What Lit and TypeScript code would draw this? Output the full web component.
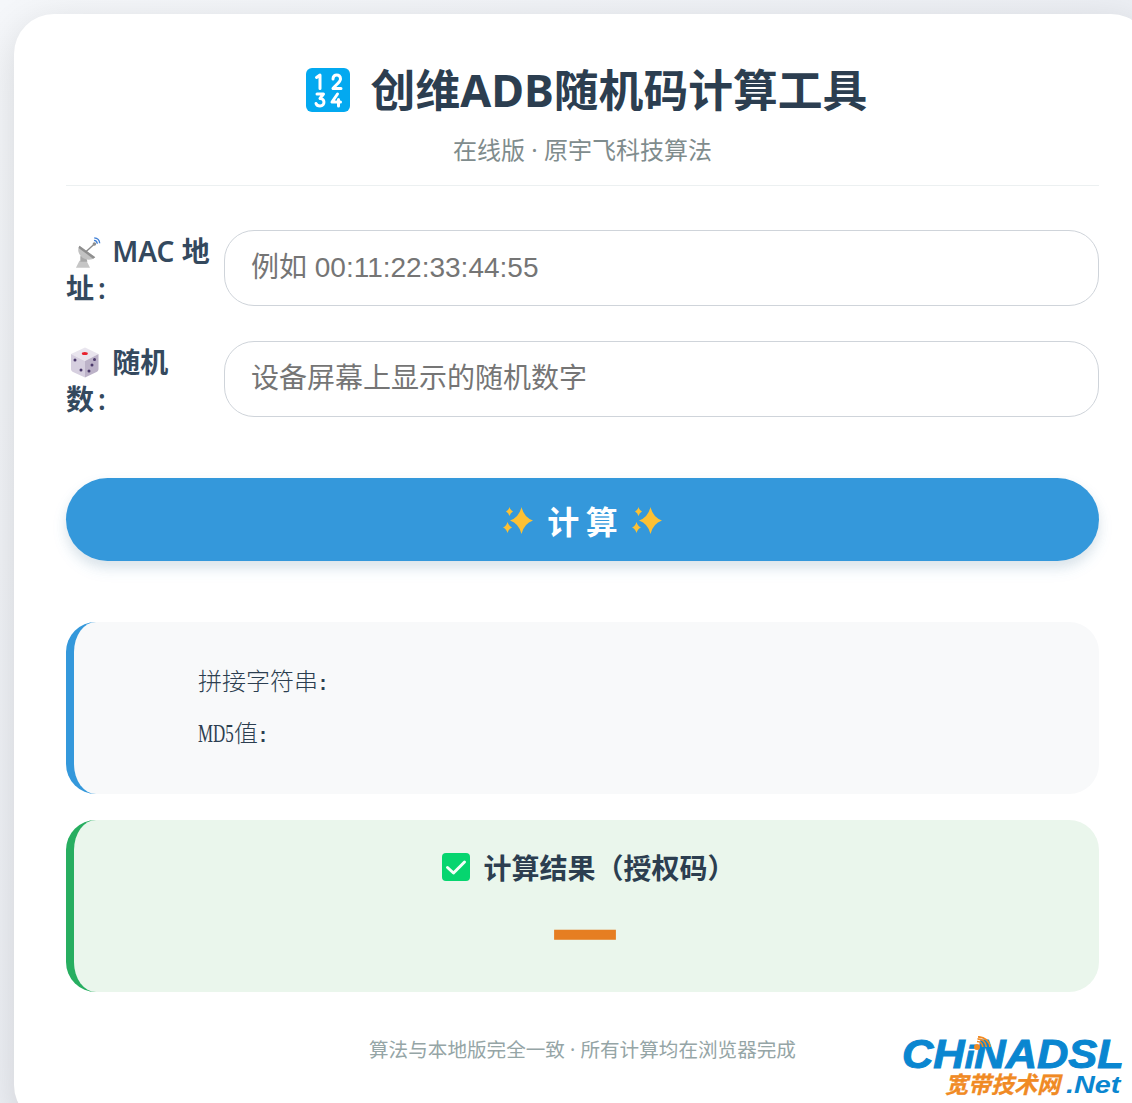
import { LitElement, html, css, svg } from "lit";
import { customElement } from "lit/decorators.js";

const sparkle = svg`<svg class="spark" viewBox="0 0 36 36" aria-hidden="true">
  <path fill="#fcc034" d="M21.500 5Q24 15.500 33 18.500Q24 21.500 21.500 32Q19 21.500 10 18.500Q19 15.500 21.500 5z"/>
  <path fill="#fcc034" d="M9.500 5Q10.500 8.500 13 9.500Q10.500 10.500 9.500 14Q8.500 10.500 6 9.500Q8.500 8.500 9.500 5z"/>
  <path fill="#fcc034" d="M7.500 20Q8.800 24.200 12 25.500Q8.800 26.800 7.500 31Q6.200 26.800 3 25.500Q6.200 24.200 7.500 20z"/>
</svg>`;

const keycap = svg`<svg class="keycap" viewBox="0 0 44 44" aria-hidden="true">
  <rect width="44" height="44" rx="6" fill="#03a9f0"/>
  <g fill="none" stroke="#fff" stroke-width="3" stroke-linecap="round" stroke-linejoin="round">
    <path d="M10.500 9.500l3.500-2.500v13.500"/>
    <path d="M27 11c0-5.500 7.500-5.500 7.500 0 0 3-4.500 5.500-7.500 9.500h8"/>
    <path d="M11 26h6.500l-3.500 4.500c5-.3 5.500 7.500 0 7.500-2 0-3.500-1-4-2.500"/>
    <path d="M31.500 26l-5.500 8h8.500M32.500 31.500v6.500"/>
  </g>
</svg>`;

const dish = svg`<svg class="emoji" viewBox="0 0 37 37" aria-hidden="true">
  <g transform="translate(2 4) scale(.88)">
    <path fill="#c6c6c6" d="M9 35l4-8h8l4 8z"/>
    <path fill="#a8a8a8" d="M14 22l6-3 2 9h-8z"/>
    <path fill="#c2c2c2" d="M13 10L31 23c-5 4.500-12 3.500-16.500-1.500-3-3.500-4-7.500-1.500-11.500z"/>
    <path fill="#8f8f8f" d="M13 10L31 23l-2.500 1.600L12 12.500z"/>
    <path stroke="#8a8a8a" stroke-width="1.600" d="M20 17L30 8" fill="none"/>
    <circle cx="30" cy="8" r="2" fill="#8d8d8d"/>
    <g fill="none" stroke="#3f7fd6" stroke-width="1.500">
      <path d="M29.500 3.800c2.200.1 3.600 1.500 3.800 3.800"/>
      <path d="M29.800 1c3.800.2 6 2.600 6.200 6.200"/>
    </g>
  </g>
</svg>`;

const die = svg`<svg class="emoji" viewBox="0 0 37 37" aria-hidden="true">
  <path fill="#e9e5ee" d="M19 3.500l13.500 6.500-13.500 7-14-7z"/>
  <path fill="#d6cfdf" d="M5 10l14 7v16.500L7 28c-1.200-.6-2-1.500-2-3z"/>
  <path fill="#bcb2c8" d="M32.500 10v15c0 1.500-.7 2.400-2 3L19 33.500V17z"/>
  <ellipse cx="18.800" cy="9.500" rx="3" ry="1.500" fill="#e8212e"/>
  <g fill="#4b3a6b">
    <circle cx="9" cy="16" r="1.500"/><circle cx="15" cy="26" r="1.500"/>
    <circle cx="28.500" cy="15.500" r="1.500"/><circle cx="26" cy="21" r="1.500"/><circle cx="23" cy="27" r="1.500"/>
  </g>
</svg>`;

const check = svg`<svg class="check" viewBox="0 0 28 28" aria-hidden="true">
  <rect width="28" height="28" rx="4" fill="#06d56f"/>
  <path d="M5.500 14.500l6 5.500L22.500 9" fill="none" stroke="#f4fff8" stroke-width="3" stroke-linecap="round" stroke-linejoin="round"/>
</svg>`;

const waves = svg`<svg class="waves" viewBox="0 0 17 14" aria-hidden="true">
  <circle cx="3" cy="11" r="3" fill="#f08a24"/>
  <g fill="none" stroke="#f08a24" stroke-width="1.700">
    <path d="M3 5.500c3.200 0 5.500 2.300 5.800 5.500"/><path d="M3.500 2.800c4.800 0 8.400 3.400 8.800 8.200"/><path d="M4 .8c6.500 0 11.500 4.500 12 10.200"/>
  </g>
</svg>`;

@customElement("app-root")
export class AppRoot extends LitElement {
  static styles = css`
    :host {
      display: block;
      width: 1132px;
      height: 1103px;
      overflow: hidden;
      position: relative;
      background: linear-gradient(135deg, #f5f7fa 0%, #e4e7ee 100%);
      font-family: "Noto Sans", "Noto Sans CJK SC", sans-serif;
    }
    .page { padding: 14px; width: 1137px; box-sizing: content-box; }
    .card {
      width: 1137px;
      box-sizing: border-box;
      background: #fff;
      border-radius: 40px;
      padding: 48px 52px 60px;
      box-shadow: 0 10px 40px rgba(0, 0, 0, 0.13);
    }
    .head { border-bottom: 1px solid #ecf0f1; padding-bottom: 17px; margin-bottom: 44px; text-align: center; }
    h1 {
      margin: 0;
      display: flex;
      justify-content: center;
      align-items: center;
      gap: 21px;
      padding-left: 8px;
      font-size: 44.800px;
      line-height: 56px;
      font-weight: 700;
      color: #2c3e50;
    }
    .keycap { width: 44px; height: 44px; display: block; }
    .sub { font-size: 24px; line-height: 36px; color: #7f8c8d; margin-top: 14px; }
    .row { display: flex; align-items: flex-start; gap: 15px; margin-bottom: 35px; }
    label {
      flex: 0 0 143px;
      min-width: 0;
      height: 76px;
      box-sizing: border-box;
      padding-top: 3px;
      font-size: 28px;
      line-height: 37px;
      font-weight: 600;
      color: #34495e;
      white-space: nowrap;
    }
    .colon { margin-left: 4px; }
    .emoji { width: 37px; height: 37px; vertical-align: -8px; margin-right: 2px; }
    input {
      flex: 1;
      min-width: 0;
      height: 76px;
      box-sizing: border-box;
      border: 1px solid #cfd4da;
      border-radius: 30px;
      padding: 0 26px;
      font-size: 28px;
      font-family: "Liberation Sans", "Noto Sans CJK SC", sans-serif;
      background: #fff;
      outline: none;
    }
    input::placeholder { color: #757575; opacity: 1; }
    button {
      display: flex;
      justify-content: center;
      align-items: center;
      gap: 11px;
      width: 100%;
      height: 83px;
      margin-top: 61px;
      border: 0;
      border-radius: 42px;
      background: #3498db;
      color: #fff;
      font-size: 32px;
      font-weight: 700;
      letter-spacing: 6.400px;
      font-family: "Noto Sans CJK SC", sans-serif;
      box-shadow: 0 8px 16px rgba(52, 152, 219, 0.1), 0 6px 12px rgba(0, 0, 0, 0.08);
    }
    button span { margin-right: -6.400px; }
    .spark { width: 36px; height: 36px; display: block; }
    .box {
      margin-top: 26px;
      height: 172px;
      box-sizing: border-box;
      border-radius: 30px;
    }
    .detail {
      margin-top: 61px;
      background: #f8f9fa;
      border-left: 8px solid #3498db;
      padding: 41px 0 0 124px;
      font-family: "Noto Sans CJK SC", sans-serif;
      font-weight: 300;
      font-size: 24px;
      line-height: 34px;
      color: #2c3e50;
    }
    .detail div { height: 34px; }
    .detail div + div { margin-top: 18px; }
    .md5 {
      display: inline-block;
      width: 36px;
      font-family: "Liberation Serif", serif;
      font-weight: 400;
      font-size: 26px;
      transform: scaleX(0.65);
      transform-origin: left;
    }
    .co { font-family: "Liberation Mono", monospace; font-size: 20px; font-weight: 700; margin-left: -1px; }
    .result { background: #eaf6ec; border-left: 8px solid #27ae60; padding-top: 27px; text-align: center; }
    .result h3 {
      margin: 0;
      display: flex;
      justify-content: center;
      align-items: center;
      gap: 13px;
      padding-left: 5px;
      font-size: 28px;
      line-height: 40px;
      font-weight: 700;
      color: #2c3e50;
      font-family: "Noto Sans CJK SC", sans-serif;
    }
    .check { width: 28px; height: 28px; display: block; }
    .code {
      margin-top: 8px;
      margin-left: -3px;
      font-family: "DejaVu Sans", sans-serif;
      font-size: 67.500px;
      line-height: 70px;
      font-weight: 700;
      color: #e67e22;
      -webkit-text-stroke: 1.500px #e67e22;
    }
    .foot { margin-top: 43px; text-align: center; font-size: 19.600px; line-height: 30px; color: #95a5a6; }
    .logo {
      position: absolute;
      left: 902px;
      top: 1036px;
      width: 224px;
      height: 64px;
      font-family: "Liberation Sans", "Noto Sans CJK SC", sans-serif;
      font-weight: 700;
      font-style: italic;
      color: #0a86d0;
    }
    .logo .en { font-size: 40px; line-height: 36px; -webkit-text-stroke: 1px #0a86d0; transform: scaleX(1.085); transform-origin: left; white-space: nowrap; }
    .logo .en small { font-size: 32px; }
    .logo .cn { position: absolute; left: 43px; top: 37px; font-size: 23px; line-height: 24px; color: #f08a24; white-space: nowrap; -webkit-text-stroke: 0.3px #f08a24; }
    .logo .net { position: absolute; left: 164px; top: 37px; font-size: 24px; line-height: 24px; white-space: nowrap; transform: scaleX(1.2); transform-origin: left; }
    .waves { position: absolute; left: 72px; top: 0; width: 17px; height: 14px; }
  `;

  render() {
    return html`
      <div class="page">
        <div class="card">
          <div class="head">
            <h1>${keycap}<span>创维ADB随机码计算工具</span></h1>
            <div class="sub">在线版 · 原宇飞科技算法</div>
          </div>
          <div class="row">
            <label>${dish} MAC 地<br />址<span class="colon">:</span></label>
            <input placeholder="例如 00:11:22:33:44:55" />
          </div>
          <div class="row">
            <label>${die} 随机<br />数<span class="colon">:</span></label>
            <input placeholder="设备屏幕上显示的随机数字" />
          </div>
          <button>${sparkle}<span>计算</span>${sparkle}</button>
          <div class="box detail">
            <div>拼接字符串<span class="co">:</span></div>
            <div><span class="md5">MD5</span>值<span class="co">:</span></div>
          </div>
          <div class="box result">
            <h3>${check}<span>计算结果（授权码）</span></h3>
            <div class="code">—</div>
          </div>
          <div class="foot">算法与本地版完全一致 · 所有计算均在浏览器完成</div>
        </div>
      </div>
      <div class="logo">
        <div class="en">CH<small>i</small>NADSL</div>
        ${waves}
        <div class="cn">宽带技术网</div>
        <div class="net">.Net</div>
      </div>
    `;
  }
}
